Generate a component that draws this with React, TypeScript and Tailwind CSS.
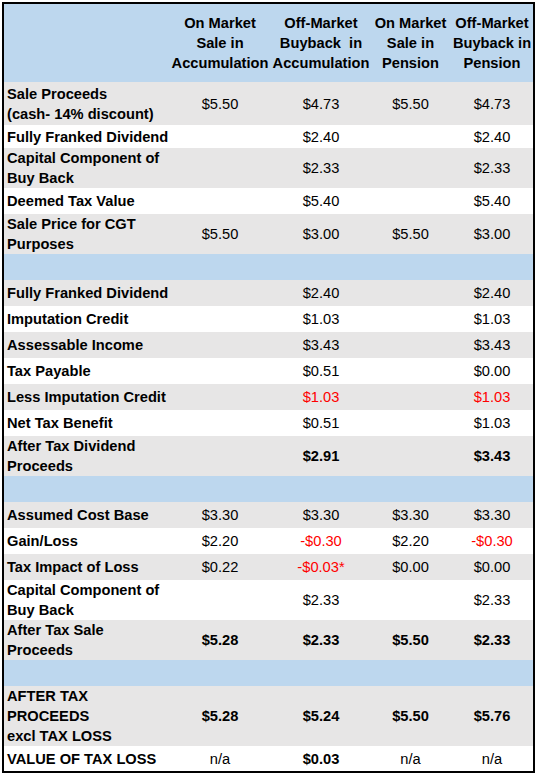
type Cell = { v: string; bold?: boolean; red?: boolean };
type Row = {
  label: string;
  bg: "gray" | "white" | "blue";
  h: string;
  cells?: Cell[];
};

const bgClass = {
  gray: "bg-[#e7e6e6]",
  white: "bg-white",
  blue: "bg-[#bdd7ee]",
};

const c = (v: string, bold = false, red = false): Cell => ({ v, bold, red });

const rows: Row[] = [
  { label: "Sale Proceeds\n(cash- 14% discount)", bg: "gray", h: "h-[43px]", cells: [c("$5.50"), c("$4.73"), c("$5.50"), c("$4.73")] },
  { label: "Fully Franked Dividend", bg: "white", h: "h-[23px]", cells: [c(""), c("$2.40"), c(""), c("$2.40")] },
  { label: "Capital Component of\nBuy Back", bg: "gray", h: "h-[40px]", cells: [c(""), c("$2.33"), c(""), c("$2.33")] },
  { label: "Deemed Tax Value", bg: "white", h: "h-[26px]", cells: [c(""), c("$5.40"), c(""), c("$5.40")] },
  { label: "Sale Price for CGT\nPurposes", bg: "gray", h: "h-[40px]", cells: [c("$5.50"), c("$3.00"), c("$5.50"), c("$3.00")] },
  { label: "", bg: "blue", h: "h-[26px]" },
  { label: "Fully Franked Dividend", bg: "gray", h: "h-[26px]", cells: [c(""), c("$2.40"), c(""), c("$2.40")] },
  { label: "Imputation Credit", bg: "white", h: "h-[26px]", cells: [c(""), c("$1.03"), c(""), c("$1.03")] },
  { label: "Assessable Income", bg: "gray", h: "h-[26px]", cells: [c(""), c("$3.43"), c(""), c("$3.43")] },
  { label: "Tax Payable", bg: "white", h: "h-[26px]", cells: [c(""), c("$0.51"), c(""), c("$0.00")] },
  { label: "Less Imputation Credit", bg: "gray", h: "h-[26px]", cells: [c(""), c("$1.03", false, true), c(""), c("$1.03", false, true)] },
  { label: "Net Tax Benefit", bg: "white", h: "h-[26px]", cells: [c(""), c("$0.51"), c(""), c("$1.03")] },
  { label: "After Tax Dividend\nProceeds", bg: "gray", h: "h-[40px]", cells: [c(""), c("$2.91", true), c(""), c("$3.43", true)] },
  { label: "", bg: "blue", h: "h-[26px]" },
  { label: "Assumed Cost Base", bg: "gray", h: "h-[26px]", cells: [c("$3.30"), c("$3.30"), c("$3.30"), c("$3.30")] },
  { label: "Gain/Loss", bg: "white", h: "h-[26px]", cells: [c("$2.20"), c("-$0.30", false, true), c("$2.20"), c("-$0.30", false, true)] },
  { label: "Tax Impact of Loss", bg: "gray", h: "h-[26px]", cells: [c("$0.22"), c("-$0.03*", false, true), c("$0.00"), c("$0.00")] },
  { label: "Capital Component of\nBuy Back", bg: "white", h: "h-[40px]", cells: [c(""), c("$2.33"), c(""), c("$2.33")] },
  { label: "After Tax Sale\nProceeds", bg: "gray", h: "h-[40px]", cells: [c("$5.28", true), c("$2.33", true), c("$5.50", true), c("$2.33", true)] },
  { label: "", bg: "blue", h: "h-[26px]" },
  { label: "AFTER TAX\nPROCEEDS\nexcl TAX LOSS", bg: "gray", h: "h-[60px]", cells: [c("$5.28", true), c("$5.24", true), c("$5.50", true), c("$5.76", true)] },
  { label: "VALUE OF TAX LOSS", bg: "white", h: "h-[25px]", cells: [c("n/a"), c("$0.03", true), c("n/a"), c("n/a")] },
];

const headers = [
  "On Market\nSale in\nAccumulation",
  "Off-Market\nBuyback  in\nAccumulation",
  "On Market\nSale in\nPension",
  "Off-Market\nBuyback in\nPension",
];

const grid = "grid grid-cols-[164px_104px_98px_81px_82px]";

export default function App() {
  return (
    <div className="h-[775px] w-[537px] bg-white pl-[2px] pt-[2px] font-['Liberation_Sans',Arial,sans-serif] text-[14.67px] leading-[20px] text-black">
      <div className="w-[533px] border-2 border-black">
        {/* header */}
        <div className={`${grid} h-[78px] bg-[#bdd7ee] font-bold`}>
          <div />
          {headers.map((h, i) => (
            <div key={i} className="flex items-center justify-center whitespace-pre text-center">
              {h}
            </div>
          ))}
        </div>

        {rows.map((r, i) => (
          <div key={i} className={`${grid} ${r.h} ${bgClass[r.bg]}`}>
            <div className="flex items-center whitespace-pre pl-[3px] font-bold">{r.label}</div>
            {r.cells?.map((cell, j) => (
              <div
                key={j}
                className={`flex items-center justify-center ${cell.bold ? "font-bold" : ""} ${cell.red ? "text-[#ff0000]" : ""}`}
              >
                {cell.v}
              </div>
            ))}
          </div>
        ))}
      </div>
    </div>
  );
}
